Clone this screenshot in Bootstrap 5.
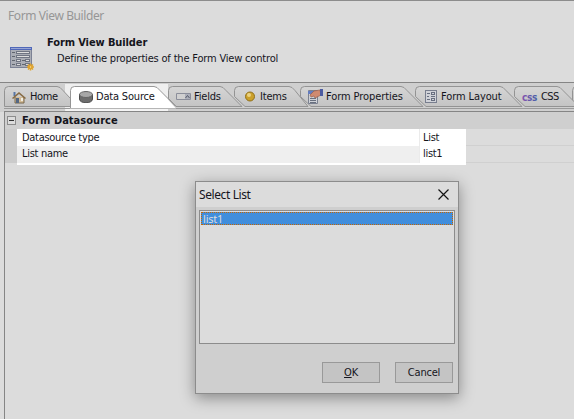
<!DOCTYPE html>
<html lang="en"><head><meta charset="utf-8"><title>Form View Builder</title>
<link href="https://cdn.jsdelivr.net/npm/bootstrap@5.3.0/dist/css/bootstrap.min.css" rel="stylesheet">
<style>
body{width:574px;height:419px;overflow:hidden;background:#dcdcdc;color:#15151c;font:11px/17px "DejaVu Sans Condensed","DejaVu Sans",sans-serif;letter-spacing:-.18px;border-top:1px solid #8c8c8c;white-space:nowrap}
svg{display:block;flex:none}
.titlebar{height:30px;padding:6px 0 0 8px;color:#969696;font-family:"Noto Sans",sans-serif;font-size:12px;letter-spacing:-.4px}
.intro{height:51px}
.intro-icon{padding:16px 0 0 10px;width:36px}
.intro-text{padding:4px 0 0 11px;line-height:16px}
.intro-text b{letter-spacing:-.1px}
.intro-text div{padding-left:10px}
.strip{height:30px;background:#cfcfcf}
.tabs{top:0;left:0;height:30px;width:574px}
.tab-item{height:28px;padding-top:1px}
.tab-item span{padding-left:3px}
.pgrid{height:307px;border-left:1px solid #858585;margin-left:4px}
.ghead{height:17px;background:#cfcfcf}
.ghead b{margin-left:6px;letter-spacing:.03px}
.gutter{width:12px;height:34px;background:#cbcbcb}
.props{width:449px;height:36px;background:#fff}
.rest{height:34px;border-bottom:1px solid #d0d0d0}
.rest div{height:17px;border-bottom:1px solid #d0d0d0}
.prow{height:17px;letter-spacing:-.3px}
.prow .pname{width:403px;padding-left:5px;border-right:1px solid #ebebeb}
.prow .pval{padding-left:3px}
.prow.alt{line-height:16px}
.prow.alt .pname{background:#efefef}
.dialog{left:195px;top:180px;width:264px;height:213px;border:1px solid #8c8c8c;background:#cfcfcf;box-shadow:0 4px 14px rgba(0,0,0,.38)}
.dhead{height:25px;background:#dcdcdc;padding:0 9px 0 3px;font-family:"Noto Sans",sans-serif;font-size:12px;letter-spacing:-.4px}
.lbox{height:134px;margin:3px 3px 0 3px;border:1px solid #8c8c8c;padding:1px;background:#dcdcdc}
.sel{height:13px;background:#418edc;border:1px dotted #c66500;color:#dcdcdc;line-height:12px;padding-left:1px;font-family:"Noto Sans",sans-serif;letter-spacing:-.2px}
.dbtns{padding:18px 5px 0 0;gap:15px}
.dbtn{width:58px;height:21px;border:1px solid #999;background:#c4c4c4;border-radius:0;padding:0;font:inherit;letter-spacing:-.2px;line-height:19px;color:#15151c}
</style>
<script src="https://cdn.jsdelivr.net/npm/bootstrap@5.3.0/dist/js/bootstrap.bundle.min.js"></script>
</head><body class="position-relative">
<header class="titlebar">Form View Builder</header>
<section class="intro d-flex">
<div class="intro-icon"><svg width="25" height="24" shape-rendering="crispEdges"><path d="M.5.5h21v20H.5z" fill="#aaadb5" stroke="#7c8295"/><path d="M0 0h22v3H0z" fill="#5068b8"/><path d="M1 1h20" stroke="#98a5d4"/><path d="M2 5.500h3M2 9.500h3M2 13.500h3M12 13.500h3M2 17.500h3M12 17.500h3" stroke="#60656f"/><path d="M6.500 4.500h13v2h-13zM6.500 8.500h13v2h-13zM6.500 12.500h4v2h-4zM15.500 12.500h4v2h-4zM6.500 16.500h4v2h-4zM15.500 16.500h4v2h-4z" fill="#ddd" stroke="#707583"/><g shape-rendering="auto" stroke="#dfa32d" stroke-width="1.500"><path d="M20.500 16.500v7M17 20h7M18 17.500l5 5M23 17.500l-5 5"/><circle cx="20.500" cy="20" r="1.500" fill="#f5dda1"/></g></svg></div>
<div class="intro-text"><b>Form View Builder</b><div>Define the properties of the Form View control</div></div>
</section>
<nav class="strip position-relative">
<svg width="574" height="30"><defs><linearGradient id="tg" x2="0" y2="1"><stop stop-color="#d5d5d5"/><stop offset="1" stop-color="#c4c4c4"/></linearGradient></defs>
<path d="M65 2h103v28H65z" fill="#efefef"/>
<g fill="url(#tg)" stroke="#8c8c8c" stroke-width=".9"><path d="M572.500 24.500v-16q0-4 4-4h12v20z"/><path d="M525 24.500l-10.500-10V8.500q0-4 4-4H557q3 0 6 4l16 16z"/><path d="M426 24.500l-10.500-10V8.500q0-4 4-4H500q3 0 6 4l16 16z"/><path d="M311 24.500l-10.500-10V8.500q0-4 4-4H401q3 0 6 4l16 16z"/><path d="M245 24.500l-10.500-10V8.500q0-4 4-4H289q3 0 6 4l13 16z"/><path d="M176 24.500l-7.500-8V8.500q0-4 4-4H220q3 0 6 4l16 16z"/><path d="M4.500 24.500V8.500q0-4 4-4H57q3 0 6 4l7.500 8v8z"/></g>
<path d="M4 26.500h570" stroke="#9a9a9a"/><path d="M70.500 26.500V8.500q0-4 4-4H154q3 0 6 4l16 18z" fill="#fff"/><path d="M70.500 26V8.500q0-4 4-4H154q3 0 6 4l16 16" fill="none" stroke="#8c8c8c" stroke-width=".9"/><path d="M70 26.500h106" stroke="#b5b5b5"/><path d="M66 28h102" stroke="#f4f4f4" stroke-width="2"/><path d="M0 .5h574M4 29.500h570" stroke="#858585"/></svg>
<div class="tabs position-absolute d-flex">
<div class="tab-item d-flex align-items-center" style="width:79px;padding-left:12px"><svg width="14" height="14"><path d="M3 7v6h9V7" fill="#d2ba94" stroke="#78684f"/><path d="M2.500 2v4" stroke="#5876a5" stroke-width="2"/><path d="M0 8l7-6 7 6-1 1-6-5-6 5z" fill="#866a43"/><path d="M4 8h3v5H4z" fill="#536783"/><path d="M9 8h2v3H9z" fill="#f1eee4"/></svg><span style="padding-left:4px;letter-spacing:-.4px">Home</span></div>
<div class="tab-item d-flex align-items-center" style="width:97px"><svg width="14" height="12"><path d="M.5 3v5c0 5 13 5 13 0V3" fill="#6d6d6d" stroke="#4c4c4c"/><ellipse cx="7" cy="3.500" rx="6.500" ry="3" fill="#a8a8a8" stroke="#666"/></svg><span>Data Source</span></div>
<div class="tab-item d-flex align-items-center" style="width:69px"><svg width="15" height="8"><path d="M.5.5h14v6H.5z" fill="#d0d0d0" stroke="#8b8e9a"/><path d="M9 1h5v5H9z" fill="#abaeb9"/><path d="M9.500 5l2-2.500 2 2.500" fill="none" stroke="#555a68"/></svg><span>Fields</span></div>
<div class="tab-item d-flex align-items-center" style="width:62px"><svg width="10" height="11"><circle cx="5" cy="5.500" r="4.500" fill="#cba02a" stroke="#90701c"/><circle cx="4" cy="4" r="2" fill="#ebd180"/></svg><span style="padding-left:5px">Items</span></div>
<div class="tab-item d-flex align-items-center" style="width:118px"><svg width="17" height="15"><path d="M1.500 1.500h9v13h-9z" fill="#ced1d7" stroke="#7b8190"/><path d="M1 2h6v3H1z" fill="#637cc0"/><path d="M3 9.500h6M3 11.500h6M3 13.500h6" stroke="#69707f"/><path d="M13 1l-6 1-4 4 1 2 3-1 1 2 4-2 2-1z" fill="#d08a70" stroke="#9a5e4c" stroke-width=".7"/><path d="M13 0h3v7h-3z" fill="#4c5ca2"/></svg><span style="padding-left:2px;letter-spacing:-.08px">Form Properties</span></div>
<div class="tab-item d-flex align-items-center" style="width:97px"><svg width="12" height="13" shape-rendering="crispEdges"><path d="M.5.5h11v12H.5z" fill="#d0d2d8" stroke="#787e8e"/><path d="M2 3.500h3M2 6.500h2M2 9.500h3M6.500 2.500h3v2h-3zM5.500 6.500h4M6.500 8.500h3v2h-3z" fill="none" stroke="#686f80"/></svg><span style="padding-left:4px;letter-spacing:-.1px">Form Layout</span></div>
<div class="tab-item d-flex align-items-center"><svg class="overflow-visible" width="16" height="14"><defs><linearGradient id="cg"><stop stop-color="#8651ae"/><stop offset="1" stop-color="#4860a8"/></linearGradient></defs><text x="0" y="11" font-family="DejaVu Sans Condensed" font-weight="bold" font-size="10" letter-spacing="-.4" fill="url(#cg)">css</text></svg><span style="letter-spacing:-.6px">CSS</span></div>
</div></nav>
<main class="pgrid">
<div class="ghead d-flex align-items-center"><svg style="margin-left:2px" width="9" height="9" shape-rendering="crispEdges"><path d="M.5.5h8v8h-8z" fill="#dcdcdc" stroke="#8c8c8c"/><path d="M2 4.500h5" stroke="#333"/></svg><b>Form Datasource</b></div>
<div class="d-flex align-items-start"><div class="gutter"></div><div class="props">
<div class="prow d-flex"><div class="pname">Datasource type</div><div class="pval">List</div></div>
<div class="prow alt d-flex"><div class="pname">List name</div><div class="pval">list1</div></div>
</div><div class="rest flex-grow-1"><div></div></div></div>
</main>
<section class="dialog position-absolute">
<div class="dhead d-flex align-items-center justify-content-between"><span>Select List</span><svg width="11" height="11"><path d="M.5.5l10 10M10.500.5l-10 10" stroke="#151515" stroke-width="1.200"/></svg></div>
<div class="lbox"><div class="sel">list1</div></div>
<div class="dbtns d-flex justify-content-end"><button class="btn dbtn"><u>O</u>K</button><button class="btn dbtn">Cancel</button></div>
</section>
</body></html>
